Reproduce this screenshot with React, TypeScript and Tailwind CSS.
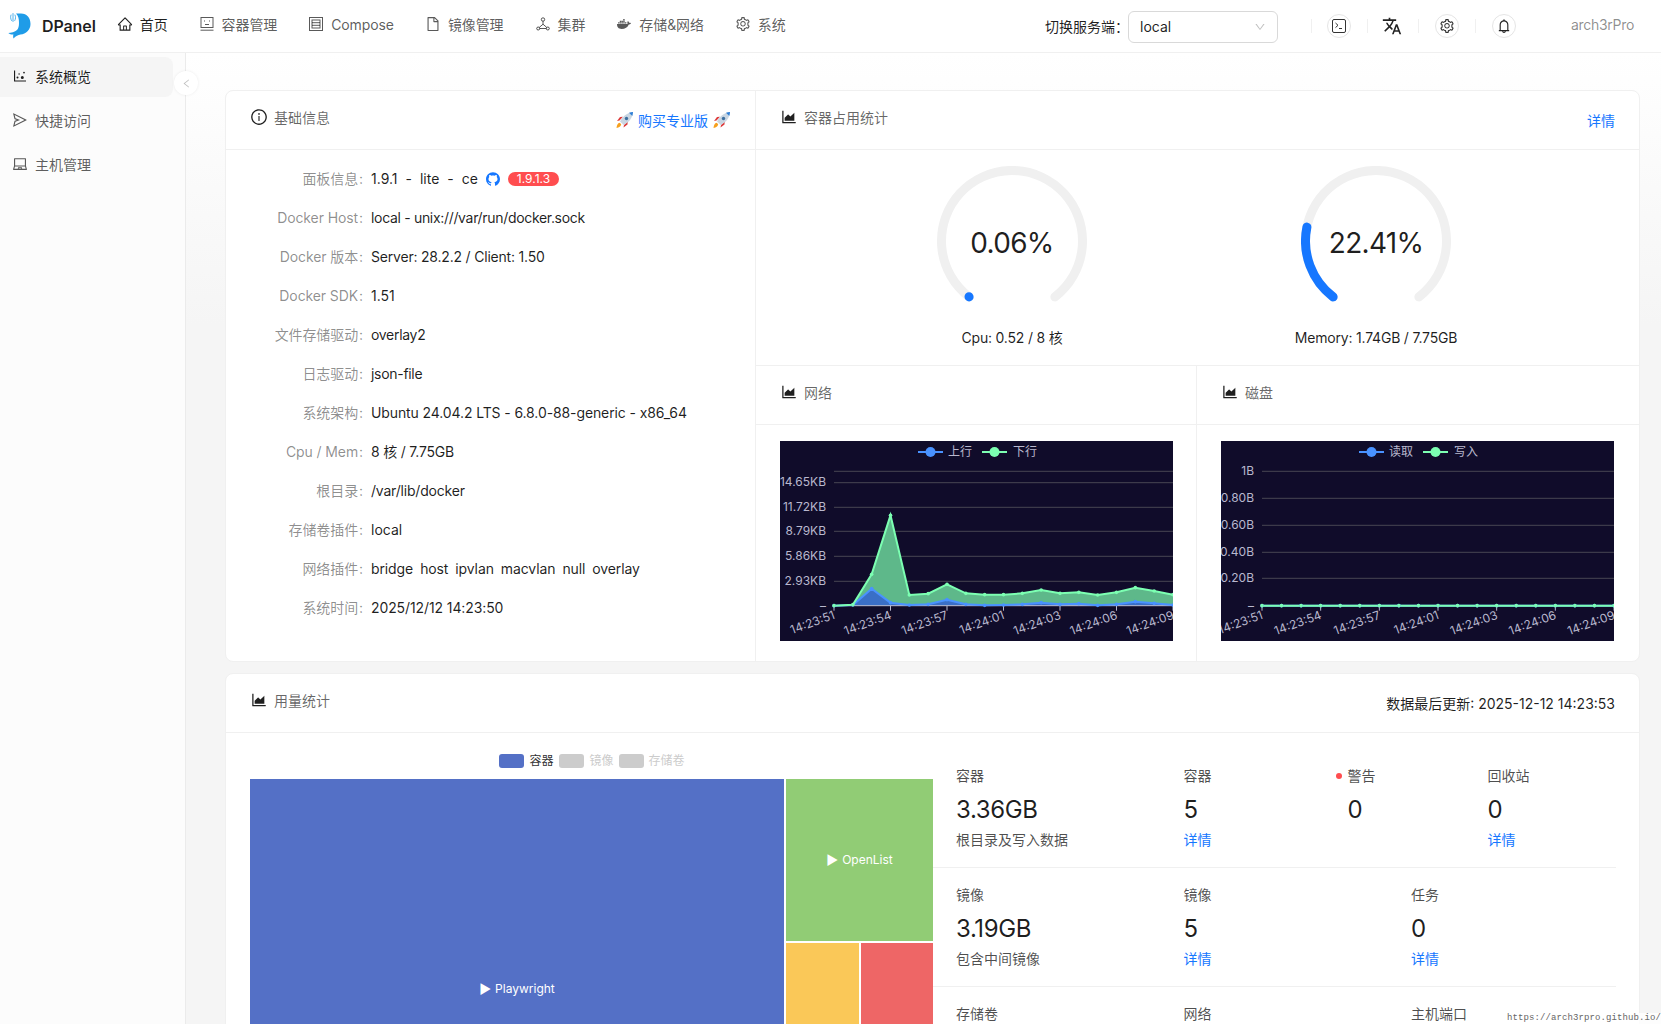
import React from "react";
import {
  AiOutlineHome, AiOutlineFile, AiOutlineSetting, AiOutlineDotChart, AiOutlineSend, AiOutlineLaptop,
  AiOutlineInfoCircle, AiOutlineAreaChart, AiFillGithub, AiOutlineLeft, AiOutlineDown, AiOutlineBell,
} from "react-icons/ai";
import { FaDocker } from "react-icons/fa";
import { MdTranslate } from "react-icons/md";

const Logo = () => (
  <svg width="24" height="26" viewBox="0 0 24 26" fill="none">
    <path d="M8 .5H13C19 .5 22.500 5 22.500 11C22.500 17 18 21 12.500 21.500C10 21.800 8 23 5.500 25.500C5 24 5 22.500 5.500 21.500C3.500 21.700 2 21.200 .3 20C3 19.800 7 19 9 17C10.500 15.500 11 13 11 10C11 6 10.500 3 8 .5Z" fill="#1f9ce8" />
    <path d="M5 .5v8M7 2c.8 1.800.8 3.800-.2 5.500M3 2c-.7 1.700-.5 3.700.5 5.500" stroke="#3fa9ea" strokeWidth="0.9" strokeLinecap="round" />
  </svg>
);

const ContainerIcon = () => (
  <svg width="14" height="14" viewBox="0 0 14 14" fill="none" stroke="currentColor" strokeWidth="1">
    <rect x="1" y="0.500" width="12" height="10" />
    <path d="M0.500 13.200h13" />
    <path d="M4 4h1M9 4h1M5 7.500h4" />
  </svg>
);
const ComposeIcon = () => (
  <svg width="14" height="14" viewBox="0 0 14 14" fill="none" stroke="currentColor" strokeWidth="1">
    <rect x="0.500" y="0.500" width="13" height="13" />
    <rect x="3" y="3" width="8" height="8" />
    <path d="M3 5.700h8M3 8.300h8" />
  </svg>
);
const ClusterIcon = () => (
  <svg width="14" height="14" viewBox="0 0 14 14" fill="none" stroke="currentColor" strokeWidth="1">
    <circle cx="7" cy="2.500" r="1.700" />
    <circle cx="2.200" cy="11.500" r="1.500" />
    <circle cx="11.800" cy="11.500" r="1.500" />
    <path d="M7 4.200v3M7 7.200L3.300 10.400M7 7.200l3.700 3.200M3.700 11.500h6.600" />
  </svg>
);
const TerminalIcon = () => (
  <svg width="14" height="14" viewBox="0 0 14 14" fill="none" stroke="#333" strokeWidth="1">
    <rect x="0.500" y="0.500" width="13" height="13" rx="1.500" />
    <path d="M3.500 4l2.500 2.300-2.500 2.300M7 9.500h3" />
  </svg>
);
const Rocket = () => (
  <svg width="19" height="18" viewBox="0 0 18 18">
    <path d="M1 17c.3-3 1.200-4.800 3.200-5.300l1.500 1.500C5.200 15.500 3.800 16.600 1 17z" fill="#f6a01e" />
    <path d="M4 9.500L1.500 10l3-4 3-.2zM8.500 14l-.5 2.600 4-3 .2-3z" fill="#dd3b3b" />
    <path d="M4.500 10.500C7.500 5 11.500 1.800 17.500 1c-.6 6-3.800 10-9.300 13z" fill="#c9d6e2" />
    <path d="M13.500 1.700c1.500-.4 2.700-.6 4-.7-.1 1.300-.3 2.600-.7 4z" fill="#2f7fd6" />
    <circle cx="11" cy="7.500" r="1.700" fill="#3d6f9e" />
  </svg>
);

const Chart = ({ legend, left, labels, gridY, green, blue }: {
  legend: [string, string]; left: number; labels: { t: string; y: number }[]; gridY: number[]; green: number[]; blue: number[];
}) => {
  const step = (393 - left) / 18;
  const pts = (a: number[]) => a.map((v, i) => [left + i * step, (v - 210) / 3] as const);
  const g = pts(green);
  const b = pts(blue);
  const line = (p: readonly (readonly [number, number])[]) => p.map(([x, y]) => `${x},${y}`).join(" ");
  const base = 164.7;
  const area = (p: readonly (readonly [number, number])[]) => `${left},${base} ${line(p)} 393,${base}`;
  const times = ["14:23:51", "14:23:54", "14:23:57", "14:24:01", "14:24:03", "14:24:06", "14:24:09"];
  const hasArea = blue.some((v) => v !== blue[0]);
  return (
    <svg width="393" height="200" viewBox="0 0 393 200" className="block bg-[#100c2a]" fontFamily="Inter, 'Noto Sans CJK SC', sans-serif">
      <g stroke="#484753" strokeWidth="1">
        {gridY.map((y) => <line key={y} x1={left} x2="393" y1={y} y2={y} />)}
      </g>
      {hasArea && <polygon points={area(g)} fill="#5eb88a" />}
      {hasArea && <polygon points={area(b)} fill="#3a6fc6" />}
      <line x1={left} x2="393" y1={base} y2={base} stroke="#b9b8ce" strokeWidth="1" />
      {times.map((t, i) => (
        <g key={t}>
          <line x1={left + i * 3 * step} x2={left + i * 3 * step} y1={base} y2={base + 5} stroke="#b9b8ce" />
          <text x={left + i * 3 * step} y={base + 13} fontSize="12" fill="#b9b8ce" textAnchor="end" transform={`rotate(-20 ${left + i * 3 * step} ${base + 8})`}>{t}</text>
        </g>
      ))}
      {labels.map((l) => <text key={l.t} x={left - 8} y={l.y + 4} fontSize="12" fill="#b9b8ce" textAnchor="end">{l.t}</text>)}
      <polyline points={line(b)} fill="none" stroke="#4992ff" strokeWidth="2" />
      <polyline points={line(g)} fill="none" stroke="#7cffb2" strokeWidth="2" />
      {b.map(([x, y], i) => <circle key={i} cx={x} cy={y} r="1.800" fill="#4992ff" />)}
      {g.map(([x, y], i) => <circle key={i} cx={x} cy={y} r="1.800" fill="#7cffb2" />)}
      <line x1="138" x2="163" y1="11" y2="11" stroke="#4992ff" strokeWidth="2" />
      <circle cx="150.500" cy="11" r="5" fill="#4992ff" />
      <text x="168" y="15" fontSize="12" fill="#b9b8ce">{legend[0]}</text>
      <line x1="202" x2="227" y1="11" y2="11" stroke="#7cffb2" strokeWidth="2" />
      <circle cx="214.500" cy="11" r="5" fill="#7cffb2" />
      <text x="233" y="15" fontSize="12" fill="#b9b8ce">{legend[1]}</text>
    </svg>
  );
};

const Gauge = ({ pct, path, caption }: { pct: string; path: string; caption: string }) => (
  <div className="flex w-[150px] flex-col items-center">
    <div className="relative h-[150px] w-[150px]">
      <svg width="150" height="150" viewBox="0 0 150 150" fill="none">
        <path d="M32.100 130.900A70.500 70.500 0 1 1 117.900 130.900" stroke="#f0f0f0" strokeWidth="9" strokeLinecap="round" />
        <path d={path} stroke="#1677ff" strokeWidth="9" strokeLinecap="round" />
      </svg>
      <div className="absolute inset-0 flex items-center justify-center pt-[3px] text-[28px] tracking-[-0.7px] text-[#000000e0]">{pct}</div>
    </div>
    <div className="mt-[11px] whitespace-nowrap text-[14px] leading-[22px] tracking-[-0.2px] text-[#000000e0]">{caption}</div>
  </div>
);

const PanelHead = ({ title, icon, children }: { title: string; icon: React.ReactNode; children?: React.ReactNode }) => (
  <div className="flex h-[59px] items-center justify-between border-b border-[#f0f0f0] px-6">
    <div className="mb-[6px] flex items-center gap-[6px] text-[14px] text-[#00000099]">
      <span className="text-[18px] text-[#000000e0]">{icon}</span>
      <span>{title}</span>
    </div>
    {children}
  </div>
);

const rows: [string, React.ReactNode, string?][] = [
  ["面板信息", (
    <span className="flex items-center">
      <span className="flex items-center gap-[8px]"><span>1.9.1</span><span>-</span><span>lite</span><span>-</span><span>ce</span></span>
      <AiFillGithub className="ml-[7px] text-[16px] text-[#1677ff]" />
      <span className="ml-[7px] flex h-[14px] w-[51px] items-center justify-center rounded-full bg-[#ff4d4f] text-[12px] leading-none text-white">1.9.1.3</span>
    </span>
  )],
  ["Docker Host", "local - unix:///var/run/docker.sock", "tracking-[-0.32px]"],
  ["Docker 版本", "Server: 28.2.2 / Client: 1.50", "tracking-[-0.2px]"],
  ["Docker SDK", "1.51"],
  ["文件存储驱动", "overlay2", "tracking-[-0.3px]"],
  ["日志驱动", "json-file", "tracking-[-0.3px]"],
  ["系统架构", "Ubuntu 24.04.2 LTS - 6.8.0-88-generic - x86_64", "tracking-[-0.11px]"],
  ["Cpu / Mem", "8 核 / 7.75GB", "tracking-[-0.2px]"],
  ["根目录", "/var/lib/docker", "tracking-[-0.2px]"],
  ["存储卷插件", "local"],
  ["网络插件", (
    <span className="flex gap-[7px] tracking-[-0.11px]"><span>bridge</span><span>host</span><span>ipvlan</span><span>macvlan</span><span>null</span><span>overlay</span></span>
  )],
  ["系统时间", "2025/12/12 14:23:50", "tracking-[-0.1px]"],
];

const navIcon = "-mx-[1px] text-[16px]";
const nav: [React.ReactNode, string][] = [
  [<AiOutlineHome className={navIcon} />, "首页"],
  [<ContainerIcon />, "容器管理"],
  [<ComposeIcon />, "Compose"],
  [<AiOutlineFile className={navIcon} />, "镜像管理"],
  [<ClusterIcon />, "集群"],
  [<FaDocker className="text-[14px]" />, "存储&网络"],
  [<AiOutlineSetting className={navIcon} />, "系统"],
];

const Stat = ({ title, value, sub, link, w, dot }: { title: string; value: string; sub?: string; link?: boolean; w: string; dot?: boolean }) => (
  <div className={`${w} shrink-0`}>
    <div className="relative h-[22px] text-[14px] leading-[22px] text-[#000000b3]">
      {dot && <span className="absolute left-[-12px] top-[8px] h-[6px] w-[6px] rounded-full bg-[#ff4d4f]" />}
      {title}
    </div>
    <div className="mt-[7px] h-[32px] text-[24px] leading-[32px] tracking-[-0.4px] text-[#000000e0]">{value}</div>
    {(sub || link) && (
      <div className={`mt-[3px] h-[22px] text-[14px] leading-[22px] ${link ? "text-[#1677ff]" : "text-[#000000b3]"}`}>{sub ?? "详情"}</div>
    )}
  </div>
);

const sideItem = "flex h-[40px] w-[173px] items-center gap-[7px] pb-[2px] pl-[12px]";

export default function App() {
  return (
    <div className="relative flex h-screen flex-col overflow-hidden bg-white font-['Inter','Noto_Sans_CJK_SC',sans-serif] text-[14px]">
      <header className="flex h-[53px] shrink-0 items-center border-b border-[#f0f0f0] bg-white pl-[8px] pr-[27px]">
        <div className="mb-[1px] flex items-center">
          <Logo />
          <span className="ml-[10px] text-[16px] font-semibold tracking-[-0.1px] text-[#000000e0]">DPanel</span>
        </div>
        <nav className="mb-[4px] ml-[22px] flex items-center gap-[32px]">
          {nav.map(([icon, label], i) => (
            <div key={label} className={`flex items-center gap-[8px] ${i === 0 ? "text-[#000000e0]" : "text-[#000000a6]"}`}>
              {icon}
              <span className="tracking-[-0.1px]">{label}</span>
            </div>
          ))}
        </nav>
        <div className="ml-auto flex items-center">
          <div className="flex items-center">
            <span className="text-[#000000e0]">切换服务端：</span>
            <div className="ml-[-1px] mt-[2px] flex h-[32px] w-[150px] items-center justify-between rounded-md border border-[#d9d9d9] px-[11px] pb-[1px] text-[#000000e0]">
              <span>local</span>
              <AiOutlineDown className="text-[12px] text-[#00000040]" />
            </div>
            <span className="ml-[33px] h-[14px] w-px bg-[#f0f0f0]" />
            <span className="ml-[15px] flex h-[24px] w-[24px] items-center justify-center rounded-full border border-[#e5e5e5]"><TerminalIcon /></span>
            <span className="ml-[16px] h-[14px] w-px bg-[#f0f0f0]" />
            <MdTranslate className="ml-[14px] text-[20px] text-[#222]" />
            <span className="ml-[16px] h-[14px] w-px bg-[#f0f0f0]" />
            <span className="ml-[16px] flex h-[24px] w-[24px] items-center justify-center rounded-full border border-[#e5e5e5]"><AiOutlineSetting className="text-[16px] text-[#333]" /></span>
            <span className="ml-[16px] h-[14px] w-px bg-[#f0f0f0]" />
            <span className="ml-[16px] flex h-[24px] w-[24px] items-center justify-center rounded-full border border-[#e5e5e5]"><AiOutlineBell className="text-[16px] text-[#222]" /></span>
          </div>
          <span className="mb-[4px] ml-[55px] tracking-[-0.3px] text-[#00000073]">arch3rPro</span>
        </div>
      </header>

      <div className="flex min-h-0 flex-1">
        <aside className="relative flex w-[186px] shrink-0 flex-col gap-[4px] border-r border-[#ebebeb] bg-[#fcfcfc] pt-[4px]">
          <div className={`${sideItem} rounded-r-lg bg-[#f5f5f5] text-[#000000e0]`}><AiOutlineDotChart className="text-[16px]" />系统概览</div>
          <div className={`${sideItem} text-[#000000a6]`}><AiOutlineSend className="text-[16px]" />快捷访问</div>
          <div className={`${sideItem} text-[#000000a6]`}><AiOutlineLaptop className="text-[16px]" />主机管理</div>
          <button className="absolute right-[-13px] top-[18px] flex h-[24px] w-[24px] items-center justify-center rounded-full bg-white shadow-[0_0_3px_rgba(0,0,0,0.08)]">
            <AiOutlineLeft className="text-[11px] text-[#00000040]" />
          </button>
        </aside>

        <main className="min-w-0 flex-1 overflow-hidden bg-[linear-gradient(#ffffff,#f5f5f5_28%)] pl-[39px] pr-[21px] pt-[37px]">
          <section className="flex h-[572px] rounded-lg border border-[#f0f0f0] bg-white">
            <div className="w-[530px] shrink-0 border-r border-[#f0f0f0]">
              <PanelHead title="基础信息" icon={<AiOutlineInfoCircle />}>
                <span className="flex items-center gap-[4px] text-[#1677ff]"><Rocket />购买专业版<Rocket /></span>
              </PanelHead>
              <div className="pl-[24px] pt-[9px]">
                {rows.map(([k, v, t]) => (
                  <div key={k} className="flex h-[39px] items-center">
                    <span className="flex w-[113px] shrink-0 justify-end whitespace-nowrap tracking-[-0.1px] text-[#00000073]">{k}<span className="ml-[1px]">:</span></span>
                    <span className={`ml-[8px] whitespace-nowrap text-[#000000e0] ${t ?? ""}`}>{v}</span>
                  </div>
                ))}
              </div>
            </div>
            <div className="flex min-w-0 flex-1 flex-col">
              <PanelHead title="容器占用统计" icon={<AiOutlineAreaChart />}>
                <span className="text-[#1677ff]">详情</span>
              </PanelHead>
              <div className="flex h-[216px] justify-center gap-[214px] border-b border-[#f0f0f0] pr-[7px] pt-[16px]">
                <Gauge pct="0.06%" path="M32.100 130.900L32 130.800" caption="Cpu: 0.52 / 8 核" />
                <Gauge pct="22.41%" path="M32.100 130.900A70.500 70.500 0 0 1 5.900 61.100" caption="Memory: 1.74GB / 7.75GB" />
              </div>
              <div className="flex flex-1">
                <div className="w-[441px] border-r border-[#f0f0f0]">
                  <PanelHead title="网络" icon={<AiOutlineAreaChart />} />
                  <div className="pl-[24px] pt-[16px]">
                    <Chart
                      legend={["上行", "下行"]}
                      left={54}
                      gridY={[30.3, 41.7, 66.3, 90.3, 115.3, 140.3]}
                      labels={[
                        { t: "14.65KB", y: 40.7 }, { t: "11.72KB", y: 65.7 }, { t: "8.79KB", y: 90.3 },
                        { t: "5.86KB", y: 115.3 }, { t: "2.93KB", y: 140 }, { t: "–", y: 164.7 },
                      ]}
                      green={[704, 701, 610, 433, 672, 668, 640, 667, 671, 671, 667, 657, 667, 664, 672, 664, 650, 660, 671]}
                      blue={[704, 702, 653, 695, 702, 700, 686, 700, 703, 702, 700, 695, 700, 698, 703, 700, 692, 697, 702]}
                    />
                  </div>
                </div>
                <div className="flex-1">
                  <PanelHead title="磁盘" icon={<AiOutlineAreaChart />} />
                  <div className="pl-[24px] pt-[16px]">
                    <Chart
                      legend={["读取", "写入"]}
                      left={41}
                      gridY={[30.3, 57.3, 84.3, 111.3, 137.3]}
                      labels={[
                        { t: "1B", y: 30 }, { t: "0.80B", y: 57 }, { t: "0.60B", y: 84 },
                        { t: "0.40B", y: 111 }, { t: "0.20B", y: 137 }, { t: "–", y: 164.7 },
                      ]}
                      green={Array(19).fill(704)}
                      blue={Array(19).fill(704)}
                    />
                  </div>
                </div>
              </div>
            </div>
          </section>

          <section className="mt-[11px] rounded-lg border border-[#f0f0f0] bg-white">
            <PanelHead title="用量统计" icon={<AiOutlineAreaChart />}>
              <span className="text-[#000000e0]">数据最后更新: 2025-12-12 14:23:53</span>
            </PanelHead>
            <div className="flex pr-[23px]">
              <div className="ml-[24px] w-[683px] shrink-0">
                <div className="flex h-[46px] items-center justify-center gap-[5px] pl-[1px] pt-[10px] text-[12px]">
                  <span className="h-[14px] w-[25px] rounded-[3px] bg-[#5470c6]" /><span className="text-[#333]">容器</span>
                  <span className="ml-[1px] h-[14px] w-[25px] rounded-[3px] bg-[#ccc]" /><span className="text-[#ccc]">镜像</span>
                  <span className="h-[14px] w-[25px] rounded-[3px] bg-[#ccc]" /><span className="text-[#ccc]">存储卷</span>
                </div>
                <div className="flex h-[420px] gap-[2px] text-[12px] text-white">
                  <div className="flex w-[534px] items-center justify-center gap-[4px] bg-[#5470c6]"><span className="text-[13px] leading-none">▶</span>Playwright</div>
                  <div className="flex w-[147px] flex-col gap-[2px]">
                    <div className="flex h-[162px] items-center justify-center gap-[4px] bg-[#91cc75]"><span className="text-[13px] leading-none">▶</span>OpenList</div>
                    <div className="flex flex-1 gap-[2px]">
                      <div className="w-[73px] bg-[#fac858]" />
                      <div className="flex-1 bg-[#ee6666]" />
                    </div>
                  </div>
                </div>
              </div>
              <div className="min-w-0 flex-1">
                <div className="flex h-[135px] border-b border-[#f0f0f0] pl-[23px] pt-[32px]">
                  <Stat w="w-[227.500px]" title="容器" value="3.36GB" sub="根目录及写入数据" />
                  <Stat w="w-[164px]" title="容器" value="5" link />
                  <div className="flex">
                    <Stat w="w-[140px]" title="警告" value="0" dot />
                    <Stat w="w-[100px]" title="回收站" value="0" link />
                  </div>
                </div>
                <div className="flex h-[119px] border-b border-[#f0f0f0] pl-[23px] pt-[16px]">
                  <Stat w="w-[227.500px]" title="镜像" value="3.19GB" sub="包含中间镜像" />
                  <Stat w="w-[227.500px]" title="镜像" value="5" link />
                  <Stat w="w-[200px]" title="任务" value="0" link />
                </div>
                <div className="flex h-[119px] pl-[23px] pt-[16px]">
                  <Stat w="w-[227.500px]" title="存储卷" value="" />
                  <Stat w="w-[227.500px]" title="网络" value="" />
                  <Stat w="w-[200px]" title="主机端口" value="" />
                </div>
              </div>
            </div>
          </section>
        </main>
      </div>

      <div className="absolute bottom-0 right-0 bg-[#ffffffcc] pl-[1px] font-['Liberation_Mono',monospace] text-[9px] leading-[11px] tracking-[0.1px] text-[#666]">https://arch3rpro.github.io/</div>
    </div>
  );
}
